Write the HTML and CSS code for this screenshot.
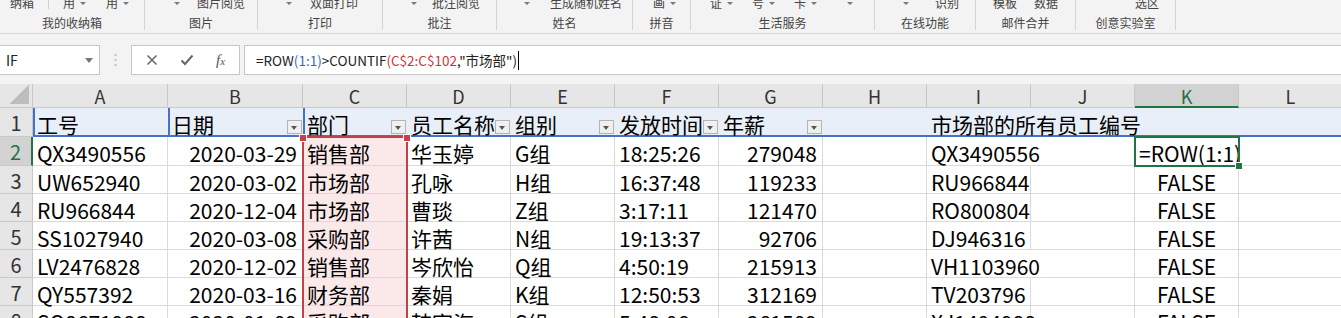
FILE: index.html
```html
<html>
<head>
  <title>Sheet</title>
  <meta name="viewport" content="width=device-width, initial-scale=1">
  <link rel="stylesheet" href="styles.css">
</head>
<body>
  <div class="ribbon">
    <div class="grp g1">
      <div class="top"><span>纳箱</span><i class="vsep"></i><span>用<i class="tri"></i></span><span class="far">用<i class="tri"></i></span></div>
      <div class="label">我的收纳箱</div>
    </div>
    <div class="grp g2">
      <div class="top"><i class="tri"></i><span>图片阅览</span></div>
      <div class="label">图片</div>
    </div>
    <div class="grp g3">
      <div class="top"><i class="tri"></i><span>双面打印</span></div>
      <div class="label">打印</div>
    </div>
    <div class="grp g4">
      <div class="top"><i class="tri"></i><span>批注阅览</span></div>
      <div class="label">批注</div>
    </div>
    <div class="grp g5">
      <div class="top"><i class="tri"></i><span>生成随机姓名</span></div>
      <div class="label">姓名</div>
    </div>
    <div class="grp g6">
      <div class="top"><span>画<i class="tri"></i></span></div>
      <div class="label">拼音</div>
    </div>
    <div class="grp g7">
      <div class="top"><span>证<i class="tri"></i></span><span>号<i class="tri"></i></span><span>卡<i class="tri"></i></span><i class="tri far"></i></div>
      <div class="label">生活服务</div>
    </div>
    <div class="grp g8">
      <div class="top"><i class="tri"></i><span>识别</span></div>
      <div class="label">在线功能</div>
    </div>
    <div class="grp g9">
      <div class="top"><span>模板</span><span>数据</span></div>
      <div class="label">邮件合并</div>
    </div>
    <div class="grp g10">
      <div class="top"><span>选区</span></div>
      <div class="label">创意实验室</div>
    </div>
  </div>

  <div class="fbar">
    <div class="namebox"><span>IF</span><i class="caret"></i></div>
    <div class="dots">
      <svg width="3" height="14" viewBox="0 0 3 14"><circle cx="1.5" cy="2" r="1.1" fill="#b8b8b8"/><circle cx="1.5" cy="7" r="1.1" fill="#b8b8b8"/><circle cx="1.5" cy="12" r="1.1" fill="#b8b8b8"/></svg>
    </div>
    <div class="fbtns">
      <svg width="12" height="12" viewBox="0 0 12 12"><path d="M1.5 1.5L10.5 10.5M10.5 1.5L1.5 10.5" stroke="#666" stroke-width="1.5"/></svg>
      <svg width="14" height="12" viewBox="0 0 14 12"><path d="M1.5 6.5L5 10L12.5 1.5" fill="none" stroke="#666" stroke-width="2"/></svg>
      <span class="fx">f<span class="fxx">x</span></span>
    </div>
    <div class="finput">=ROW<span class="fblue">(1:1)</span>&gt;COUNTIF<span class="fred">(C$2:C$102</span>,"市场部")<i class="cursor"></i></div>
  </div>

  <div class="sheet">
    <div class="corner"></div>
    <div class="ch">A</div><div class="ch">B</div><div class="ch">C</div><div class="ch">D</div><div class="ch">E</div><div class="ch">F</div>
    <div class="ch">G</div><div class="ch">H</div><div class="ch">I</div><div class="ch">J</div><div class="ch sel">K</div><div class="ch">L</div>

    <div class="rh">1</div>
    <div class="c hd bl"><span>工号</span></div>
    <div class="c hd bl"><span>日期</span><i class="fbtn"></i></div>
    <div class="c hd bl"><span>部门</span><i class="fbtn"></i></div>
    <div class="c hd"><span>员工名称</span><i class="fbtn"></i></div>
    <div class="c hd"><span>组别</span><i class="fbtn"></i></div>
    <div class="c hd"><span>发放时间</span><i class="fbtn"></i></div>
    <div class="c hd"><span>年薪</span><i class="fbtn"></i></div>
    <div class="c hd"></div>
    <div class="c hd wide"><span>市场部的所有员工编号</span></div>

    <div class="rh sel">2</div>
    <div class="c">QX3490556</div><div class="c r">2020-03-29</div><div class="c pk">销售部</div><div class="c">华玉婷</div><div class="c">G组</div><div class="c">18:25:26</div><div class="c r">279048</div><div class="c"></div><div class="c ov">QX3490556</div><div class="c"></div><div class="c ov">=ROW(1:1)</div><div class="c"></div>

    <div class="rh">3</div>
    <div class="c">UW652940</div><div class="c r">2020-03-02</div><div class="c pk">市场部</div><div class="c">孔咏</div><div class="c">H组</div><div class="c">16:37:48</div><div class="c r">119233</div><div class="c"></div><div class="c">RU966844</div><div class="c"></div><div class="c m">FALSE</div><div class="c"></div>

    <div class="rh">4</div>
    <div class="c">RU966844</div><div class="c r">2020-12-04</div><div class="c pk">市场部</div><div class="c">曹琰</div><div class="c">Z组</div><div class="c">3:17:11</div><div class="c r">121470</div><div class="c"></div><div class="c">RO800804</div><div class="c"></div><div class="c m">FALSE</div><div class="c"></div>

    <div class="rh">5</div>
    <div class="c">SS1027940</div><div class="c r">2020-03-08</div><div class="c pk">采购部</div><div class="c">许茜</div><div class="c">N组</div><div class="c">19:13:37</div><div class="c r">92706</div><div class="c"></div><div class="c">DJ946316</div><div class="c"></div><div class="c m">FALSE</div><div class="c"></div>

    <div class="rh">6</div>
    <div class="c">LV2476828</div><div class="c r">2020-12-02</div><div class="c pk">销售部</div><div class="c">岑欣怡</div><div class="c">Q组</div><div class="c">4:50:19</div><div class="c r">215913</div><div class="c"></div><div class="c ov">VH1103960</div><div class="c"></div><div class="c m">FALSE</div><div class="c"></div>

    <div class="rh">7</div>
    <div class="c">QY557392</div><div class="c r">2020-03-16</div><div class="c pk">财务部</div><div class="c">秦娟</div><div class="c">K组</div><div class="c">12:50:53</div><div class="c r">312169</div><div class="c"></div><div class="c">TV203796</div><div class="c"></div><div class="c m">FALSE</div><div class="c"></div>

    <div class="rh">8</div>
    <div class="c">SQ8671988</div><div class="c r">2020-01-09</div><div class="c pk">采购部</div><div class="c">韩宇海</div><div class="c">S组</div><div class="c">5:48:06</div><div class="c r">261509</div><div class="c"></div><div class="c">XJ1404988</div><div class="c"></div><div class="c m">FALSE</div><div class="c"></div>

    <div class="range"></div>
    <div class="active"></div>
  </div>
</body>
</html>
```

FILE: styles.css
```css
html, body { margin: 0; overflow: hidden; }
body { width: 1341px; height: 318px; background: #f3f3f3; font-family: "Noto Sans CJK SC", "Liberation Sans", sans-serif; color: #000; }

/* ribbon */
.ribbon { display: flex; height: 33px; border-bottom: 1px solid #d5d5d5; overflow: hidden; color: #444; font-size: 12px; }
.grp { height: 30px; box-sizing: border-box; border-right: 1px solid #d4d4d4; display: flex; flex-direction: column; }
.top { display: flex; align-items: center; height: 16px; line-height: 16px; margin-top: -5px; white-space: nowrap; }
.top span { display: inline-flex; align-items: center; }
.label { text-align: center; line-height: 16px; margin-top: 4px; white-space: nowrap; }
.tri { display: inline-block; width: 0; height: 0; border-left: 3px solid transparent; border-right: 3px solid transparent; border-top: 3px solid #777; margin-left: 5px; }
.top > .tri { margin-left: 0; }
.vsep { display: inline-block; width: 1px; height: 12px; background: #d0d0d0; }
.g1 { width: 145px; } .g1 .top { padding-left: 10px; gap: 14px; } .g1 .far { margin-left: 6px; }
.g2 { width: 113px; } .g2 .top { padding-left: 29px; gap: 17px; }
.g3 { width: 125px; } .g3 .top { padding-left: 28px; gap: 18px; }
.g4 { width: 114px; } .g4 .top { padding-left: 28px; gap: 15px; }
.g5 { width: 136px; } .g5 .top { padding-left: 27px; gap: 20px; }
.g6 { width: 58px; } .g6 .top { padding-left: 20px; }
.g7 { width: 184px; } .g7 .top { padding-left: 19px; gap: 19px; } .g7 .far { margin-left: 11px; }
.g8 { width: 101px; } .g8 .top { padding-left: 28px; gap: 26px; }
.g9 { width: 100px; } .g9 .top { padding-left: 17px; gap: 17px; }
.g10 { width: 100px; } .g10 .top { padding-left: 59px; }

/* formula bar */
.fbar { display: flex; height: 30px; padding: 11px 0 9px; }
.namebox { width: 100px; box-sizing: border-box; background: #fff; border: 1px solid #c6c6c6; border-left: none; display: flex; align-items: center; justify-content: space-between; padding: 0 6px; font-size: 14px; color: #222; }
.caret { width: 0; height: 0; border-left: 4px solid transparent; border-right: 4px solid transparent; border-top: 5px solid #777; }
.dots { width: 31px; display: flex; align-items: center; justify-content: center; }
.fbtns { width: 109px; box-sizing: border-box; background: #fff; border: 1px solid #c6c6c6; display: flex; align-items: center; padding-left: 14px; gap: 22px; }
.fx { font-family: "Liberation Serif", serif; font-style: italic; font-size: 15px; color: #555; }
.fxx { font-size: 11px; }
.finput { flex: 1; margin-left: 4px; background: #fff; border: 1px solid #c6c6c6; border-right: none; display: flex; align-items: center; padding-left: 11px; font-size: 13.5px; color: #222; white-space: nowrap; }
.fblue { color: #3465c9; }
.fred { color: #c8363d; }
.cursor { display: inline-block; width: 1px; height: 19px; background: #000; margin-left: 1px; }

/* sheet */
.sheet { position: relative; display: grid; grid-template-columns: 33px 135px 135px repeat(10, 104px); grid-template-rows: 24px 29px 29px repeat(6, 28px); background: #fff; font-size: 21px; }
.corner { background: linear-gradient(135deg, transparent 50%, #bdbdbd 50%) no-repeat right 3px bottom 3px / 19px 19px, #e6e6e6; border-right: 1px solid #c8c8c8; border-bottom: 1px solid #c8c8c8; }
.ch { background: #e6e6e6; border-right: 1px solid #c8c8c8; border-bottom: 1px solid #c8c8c8; text-align: center; font-size: 18px; line-height: 24px; color: #333; box-sizing: border-box; }
.ch.sel { background: #d2d2d2; color: #217346; border-bottom: 2px solid #217346; }
.rh { background: #e6e6e6; border-right: 1px solid #c8c8c8; border-bottom: 1px solid #c8c8c8; text-align: center; line-height: 28px; padding-top: 1px; box-sizing: border-box; font-size: 20px; color: #333; }
.rh.sel { background: #d2d2d2; color: #217346; border-right: 2px solid #217346; }

.c { box-sizing: border-box; border-right: 1px solid #dadada; border-bottom: 1px solid #dadada; padding: 2px 4px 0; line-height: 28px; white-space: nowrap; overflow: visible; }
.c.r { text-align: right; padding-right: 5px; }
.c.m { text-align: center; }
.c.ov { border-right-color: transparent; position: relative; }
.c.pk { background: #fbe9e9; }

.hd { display: flex; background: #e9eff8; border-right: none; border-bottom: 2px solid #4472c4; padding-right: 1px; }
.hd.bl { box-shadow: inset 2px 0 0 #4472c4; }
.hd.wide { grid-column: span 4; }
.fbtn { margin-left: auto; margin-top: 10px; width: 15px; height: 14px; box-sizing: border-box; border: 1px solid #b4b4b4; background: #efefef; position: relative; flex: none; }
.fbtn::after { content: ""; position: absolute; left: 3px; top: 5px; border-left: 3.5px solid transparent; border-right: 3.5px solid transparent; border-top: 4px solid #555; }

.range { position: absolute; left: 302px; top: 52px; width: 106px; height: 300px; box-sizing: border-box; border: 2px solid #c5414a; }
.range::before, .range::after { content: ""; position: absolute; top: -4px; width: 6px; height: 6px; background: #c5414a; border: 1px solid #fff; }
.range::before { left: -5px; }
.range::after { right: -5px; }
.active { position: absolute; left: 1134px; top: 52px; width: 106px; height: 31px; box-sizing: border-box; border: 2px solid #217346; }
.active::after { content: ""; position: absolute; right: -5px; bottom: -5px; width: 6px; height: 6px; background: #217346; border: 1px solid #fff; }
```
